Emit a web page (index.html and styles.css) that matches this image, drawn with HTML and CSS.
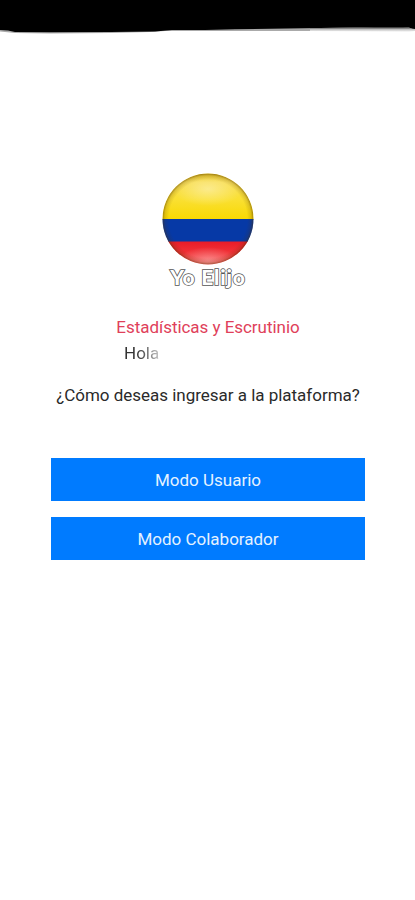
FILE: index.html
```html
<!DOCTYPE html>
<html lang="es">
<head>
    <meta charset="UTF-8">
    <meta name="viewport" content="width=device-width, initial-scale=1.0">
    <title>Yo Elijo</title>
    <link rel="stylesheet" href="styles.css">
</head>
<body>
    <div class="app">
        <svg class="status-bar" viewBox="0 0 415 36" aria-hidden="true">
            <defs>
                <linearGradient id="edge" x1="0" y1="0" x2="0" y2="1">
                    <stop offset="0" stop-color="#000"/>
                    <stop offset="0.5" stop-color="#bbb"/>
                    <stop offset="1" stop-color="#fff"/>
                </linearGradient>
            </defs>
            <path fill="#aaa" d="M0 0H415V31L409 31L320 31L235 31L205 31L165 31L150 32L110 33L50 33.5L15 33L0 31.5Z"/>
            <path fill="#000" d="M0 0H415V30L409 27.5L375 27L320 28L235 29.2L205 30L172 30L155 31.5L110 32L50 32.3L15 32L8 30.5L0 30Z"/>
            <path fill="url(#edge)" d="M310 28.3L400 26.5L415 29V31L409 32L310 31Z"/>
        </svg>

        <main class="content">
            <div class="logo">
                <svg class="flag" viewBox="0 0 92 92" role="img" aria-label="Colombia">
                    <defs>
                        <clipPath id="ball"><circle cx="46" cy="46" r="45.5"/></clipPath>
                        <linearGradient id="yellow" x1="0" y1="0" x2="0" y2="1">
                            <stop offset="0" stop-color="#e8c418"/>
                            <stop offset="0.2" stop-color="#f8dc48"/>
                            <stop offset="0.55" stop-color="#fae034"/>
                            <stop offset="1" stop-color="#f8d800"/>
                        </linearGradient>
                        <linearGradient id="red" x1="0" y1="0" x2="0" y2="1">
                            <stop offset="0" stop-color="#e81c28"/>
                            <stop offset="1" stop-color="#fc4a48"/>
                        </linearGradient>
                        <radialGradient id="shade">
                            <stop offset="0.86" stop-color="#503000" stop-opacity="0"/>
                            <stop offset="0.95" stop-color="#503000" stop-opacity="0.16"/>
                            <stop offset="1" stop-color="#503000" stop-opacity="0.5"/>
                        </radialGradient>
                        <radialGradient id="glow">
                            <stop offset="0" stop-color="#fff" stop-opacity="0.4"/>
                            <stop offset="1" stop-color="#fff" stop-opacity="0"/>
                        </radialGradient>
                    </defs>
                    <g clip-path="url(#ball)">
                        <rect width="92" height="47" fill="url(#yellow)"/>
                        <rect y="46" width="92" height="23" fill="#0639a6"/>
                        <rect y="68.5" width="92" height="24" fill="url(#red)"/>
                        <ellipse cx="46" cy="16" rx="35" ry="17" fill="url(#glow)"/>
                        <ellipse cx="46" cy="88" rx="30" ry="14" fill="url(#glow)"/>
                        <circle cx="46" cy="46" r="45.5" fill="url(#shade)"/>
                    </g>
                </svg>
                <h1 class="brand">Yo Elijo</h1>
            </div>

            <h2 class="subtitle">Estadísticas y Escrutinio</h2>
            <p class="greeting">Hola</p>
            <p class="question">¿Cómo deseas ingresar a la plataforma?</p>

            <div class="actions">
                <button class="mode-button">Modo Usuario</button>
                <button class="mode-button">Modo Colaborador</button>
            </div>
        </main>
    </div>
</body>
</html>
```

FILE: styles.css
```css
* {
    margin: 0;
    padding: 0;
    box-sizing: border-box;
}

body {
    font-family: Roboto, sans-serif;
    background-color: #ffffff;
    color: #2a2a2a;
}

.app {
    min-height: 900px;
}

.status-bar {
    display: block;
    width: 100%;
    height: 36px;
}

.content {
    display: flex;
    flex-direction: column;
    align-items: center;
    padding: 137px 0 0 1px;
}

.logo {
    display: flex;
    flex-direction: column;
    align-items: center;
}

.flag {
    display: block;
    width: 92px;
    height: 92px;
}

.brand {
    height: 26px;
    font-family: Lato, sans-serif;
    font-size: 21px;
    line-height: 24px;
    font-weight: 900;
    letter-spacing: 0.8px;
    color: #ffffff;
    -webkit-text-stroke: 1.6px #555555;
    paint-order: stroke fill;
}

.subtitle {
    margin-top: 24px;
    font-size: 17px;
    line-height: 24px;
    font-weight: 400;
    letter-spacing: -0.04px;
    color: #e0405a;
}

.greeting {
    width: 168px;
    margin-top: 2px;
    font-size: 17px;
    line-height: 24px;
    background: linear-gradient(90deg, #333333 12px, #666666 22px, #cccccc 36px);
    -webkit-background-clip: text;
    background-clip: text;
    color: transparent;
}

.question {
    margin-top: 18px;
    font-size: 17px;
    line-height: 24px;
    letter-spacing: -0.02px;
}

.actions {
    display: flex;
    flex-direction: column;
    gap: 16px;
    width: 314px;
    margin-top: 51px;
}

.mode-button {
    height: 43px;
    border: none;
    background: #007bff;
    color: #e4f2ff;
    font-family: inherit;
    font-size: 17px;
    line-height: 24px;
}
```
